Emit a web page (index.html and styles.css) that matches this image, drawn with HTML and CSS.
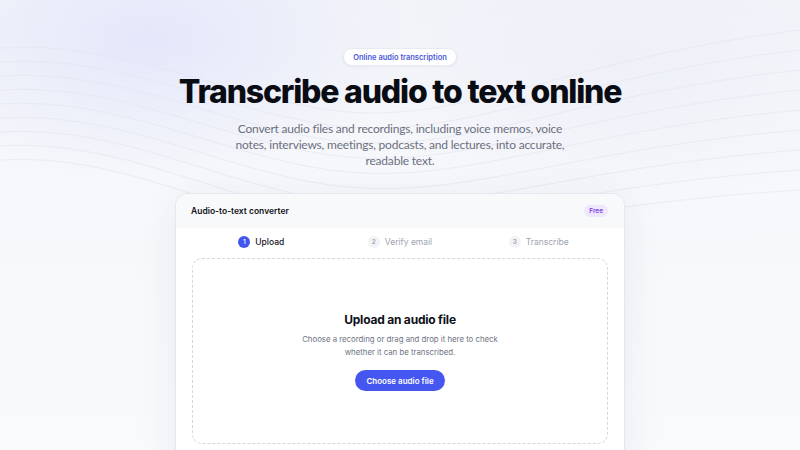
FILE: index.html
```html
<!DOCTYPE html>
<html lang="en">
<head>
<meta charset="utf-8">
<title>Transcribe audio to text online</title>
<link rel="stylesheet" href="styles.css">
</head>
<body>
<div class="page">
  <svg class="waves" width="800" height="260" viewBox="0 0 800 260" preserveAspectRatio="none" aria-hidden="true">
    <g fill="none" stroke="#e4e6ee" stroke-width="1">
      <path d="M0 48 C120 40 220 95 330 110 C460 128 560 60 800 30"/>
      <path d="M0 62 C120 54 220 110 330 125 C460 143 560 78 800 50"/>
      <path d="M0 76 C120 68 220 125 330 140 C460 158 560 96 800 70"/>
      <path d="M0 90 C120 82 220 140 330 155 C460 173 560 114 800 90"/>
      <path d="M0 104 C120 96 220 155 330 170 C460 188 560 132 800 110"/>
      <path d="M0 118 C120 110 220 170 330 185 C460 203 560 150 800 130"/>
      <path d="M0 132 C120 124 220 185 330 200 C460 218 560 168 800 150"/>
      <path d="M0 146 C120 138 220 200 330 215 C460 233 560 186 800 170"/>
      <path d="M0 160 C120 152 220 215 330 230 C460 248 560 204 800 190"/>
    </g>
  </svg>
  <main class="hero">
    <span class="eyebrow">Online audio transcription</span>
    <h1 class="title">Transcribe audio to text online</h1>
    <p class="lead">Convert audio files and recordings, including voice memos, voice notes, interviews, meetings, podcasts, and lectures, into accurate, readable text.</p>
    <section class="card">
      <header class="card-head">
        <span class="card-title">Audio-to-text converter</span>
        <span class="free">Free</span>
      </header>
      <ol class="steps">
        <li class="step active"><span class="num">1</span><span class="label">Upload</span></li>
        <li class="step"><span class="num">2</span><span class="label">Verify email</span></li>
        <li class="step"><span class="num">3</span><span class="label">Transcribe</span></li>
      </ol>
      <div class="drop">
        <h2 class="drop-title">Upload an audio file</h2>
        <p class="drop-text">Choose a recording or drag and drop it here to check<br>whether it can be transcribed.</p>
        <button class="btn" type="button">Choose audio file</button>
      </div>
    </section>
  </main>
</div>
</body>
</html>
```

FILE: styles.css
```css
* { box-sizing: border-box; }
html, body { margin: 0; padding: 0; }
body {
  font-family: Inter, "Noto Sans", "DejaVu Sans", sans-serif;
  background: #f8f9fc;
  color: #0b0d14;
  overflow: hidden;
}
.page {
  position: relative;
  width: 800px;
  height: 450px;
  overflow: hidden;
  background:
    radial-gradient(ellipse 260px 140px at 150px 40px, rgba(226,230,250,0.9), rgba(226,230,250,0) 100%),
    radial-gradient(ellipse 260px 160px at 620px 60px, rgba(236,238,248,0.7), rgba(236,238,248,0) 100%),
    linear-gradient(180deg, #f3f4f9 0%, #f7f8fb 45%, #f9fafc 100%);
}
.waves {
  position: absolute;
  left: 0;
  top: 0;
  opacity: 0.6;
}
.hero {
  position: relative;
  display: flex;
  flex-direction: column;
  align-items: center;
  padding-top: 48px;
}
.eyebrow {
  display: inline-flex;
  align-items: center;
  height: 18px;
  padding: 0 9px;
  font-size: 7.5px;
  font-weight: 600;
  color: #4b59d9;
  background: #ffffff;
  border: 1px solid #e8eaf1;
  border-radius: 999px;
  box-shadow: 0 1px 3px rgba(30,40,90,0.05);
}
.title {
  margin: 6px 0 0;
  font-size: 32px;
  line-height: 40px;
  font-weight: 800;
  letter-spacing: -1.2px;
  color: #0a0c14;
}
.lead {
  margin: 9px 0 0;
  width: 345px;
  text-align: center;
  font-family: Lato, Inter, sans-serif;
  font-size: 12px;
  letter-spacing: -0.2px;
  line-height: 16px;
  color: #6b7080;
}
.card {
  margin-top: 25px;
  width: 448px;
  background: #ffffff;
  border-radius: 12px;
  box-shadow: 0 8px 40px rgba(40,50,90,0.08), 0 0 0 1px rgba(230,232,240,0.7);
  overflow: hidden;
  padding-bottom: 30px;
}
.card-head {
  height: 34px;
  display: flex;
  align-items: center;
  justify-content: space-between;
  padding: 0 16px 0 15px;
  background: #f8f9fb;
}
.card-title {
  font-size: 8.5px;
  font-weight: 600;
  color: #111318;
}
.free {
  display: inline-flex;
  align-items: center;
  height: 12px;
  padding: 0 5px;
  font-size: 6.5px;
  font-weight: 600;
  color: #7a3fe0;
  background: #efe8fd;
  border-radius: 999px;
}
.steps {
  list-style: none;
  margin: 0;
  padding: 0 16px;
  height: 30px;
  display: grid;
  grid-template-columns: 1fr 1fr 1fr;
  align-items: center;
}
.step {
  display: flex;
  align-items: center;
  justify-content: center;
  gap: 5px;
  margin-top: -2px;
}
.num {
  width: 12px;
  height: 12px;
  border-radius: 50%;
  display: inline-flex;
  align-items: center;
  justify-content: center;
  font-size: 6.5px;
  font-weight: 500;
  background: #f2f3f6;
  color: #8f94a3;
}
.label {
  font-size: 8.5px;
  color: #9ea3b0;
}
.step.active .num {
  background: #4357ee;
  color: #ffffff;
}
.step.active .label {
  color: #14161d;
  font-weight: 500;
}
.drop {
  margin: 0 16px;
  height: 186px;
  border: 1px dashed #d3d6dd;
  border-radius: 10px;
  display: flex;
  flex-direction: column;
  align-items: center;
  justify-content: center;
}
.drop-title {
  margin: 0;
  font-size: 12px;
  line-height: 18px;
  font-weight: 700;
  color: #0e1017;
  letter-spacing: -0.2px;
}
.drop-text {
  margin: 4px 0 0;
  text-align: center;
  font-size: 7.8px;
  line-height: 13px;
  color: #6e7382;
}
.btn {
  margin-top: 11px;
  width: 90px;
  height: 21px;
  border: 0;
  border-radius: 999px;
  background: #4557f0;
  color: #ffffff;
  font-family: inherit;
  font-size: 8px;
  font-weight: 600;
  padding: 0;
}
```
